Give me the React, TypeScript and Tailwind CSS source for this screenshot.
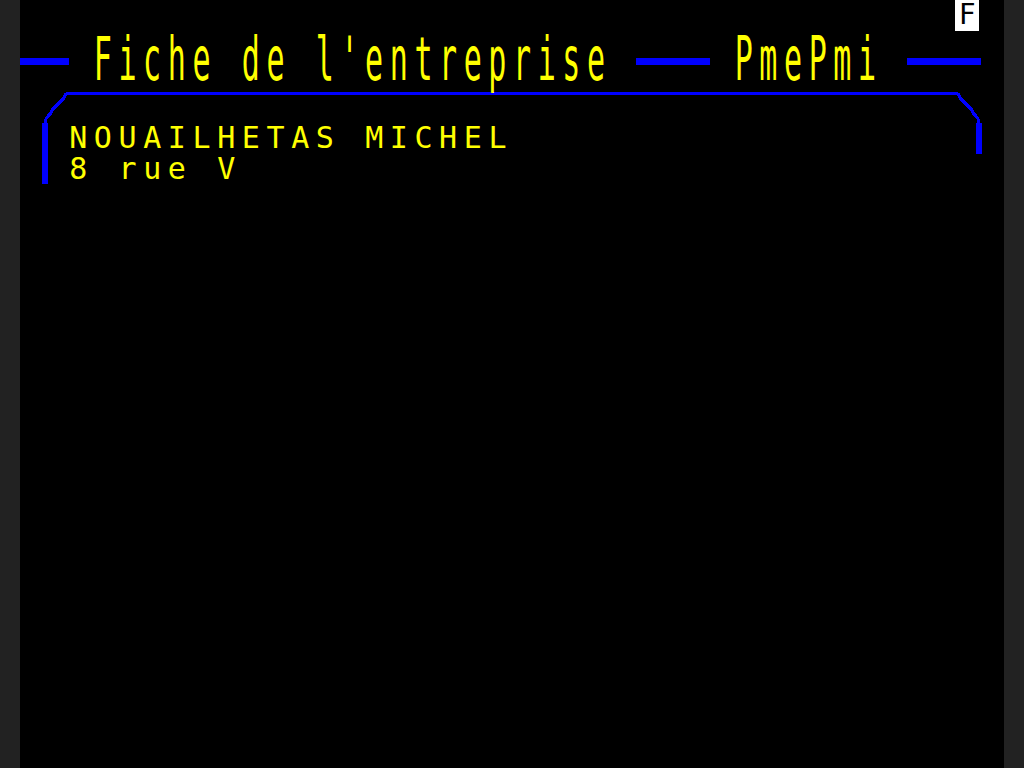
import React from 'react';

const mono = { fontFamily: '"DejaVu Sans Mono", "Liberation Mono", monospace' };

function Bar({ cols }: { cols: number }) {
  return <div className="h-[7px] mt-[27px] bg-[#0000ff] shrink-0" style={{ width: cols * 24.6 }} />;
}

function Gap() {
  return <div className="w-[24.6px] shrink-0" />;
}

function Title({ text }: { text: string }) {
  return (
    <div className="h-[61.44px] flex flex-col justify-end shrink-0">
      <span className="block h-[30.72px] leading-[30.72px] text-[30px] tracking-[6.6px] text-[#ffff00] whitespace-pre origin-bottom scale-y-[2]">
        {text}
      </span>
    </div>
  );
}

export default function App() {
  return (
    <div className="w-full h-[768px] bg-[#222222] flex justify-center" style={mono}>
      <div className="w-[984px] h-full bg-black flex flex-col overflow-hidden">
        {/* row 0: status line */}
        <div className="h-[30.72px] flex justify-end pr-[24.6px] shrink-0">
          <div className="w-[24.6px] h-[31px] bg-white text-black text-[28px] leading-[29px] text-center">F</div>
        </div>

        {/* rows 1-2: double height title */}
        <div className="h-[61.44px] flex items-start shrink-0">
          <Bar cols={2} />
          <Gap />
          <Title text="Fiche de l'entreprise" />
          <Gap />
          <Bar cols={3} />
          <Gap />
          <Title text="PmePmi" />
          <Gap />
          <Bar cols={3} />
        </div>

        {/* row 3: frame top */}
        <svg width="984" height="30.72" className="block shrink-0" shapeRendering="crispEdges">
          <rect x="46" y="0" width="892" height="3" fill="#0000ff" />
          <polyline points="46,1 44,6 41,9 38,12 35,15 32,18 31,21 28,24 26,27 25,31" fill="none" stroke="#0000ff" strokeWidth="3" />
          <polyline points="938,1 940,6 943,9 946,12 949,15 952,18 953,21 956,24 958,27 959,31" fill="none" stroke="#0000ff" strokeWidth="3" />
        </svg>

        {/* rows 4-5: company card */}
        <div className="flex items-start shrink-0">
          <div className="ml-[22px] w-[6px] h-[61.44px] bg-[#0000ff] shrink-0" />
          <div className="ml-[21.2px] flex-1 text-[#ffff00] text-[30px] leading-[30.72px] tracking-[6.6px] whitespace-pre">
            <div className="h-[30.72px]">NOUAILHETAS MICHEL</div>
            <div className="h-[30.72px]">8 rue V</div>
          </div>
          <div className="mr-[22px] w-[6px] h-[30.72px] bg-[#0000ff] shrink-0" />
        </div>
      </div>
    </div>
  );
}
